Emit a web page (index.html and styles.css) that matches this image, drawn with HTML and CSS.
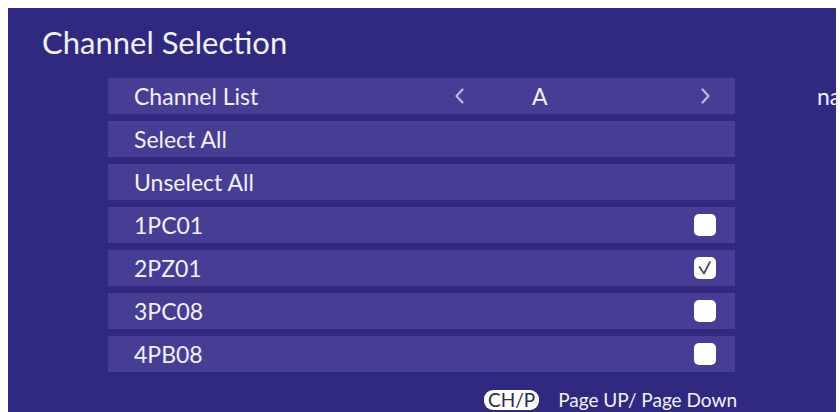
FILE: index.html
```html
<!DOCTYPE html>
<html>
<head>
    <title>Channel Selection</title>
    <link rel="stylesheet" href="styles.css">
</head>
<body>
    <div class="panel">
        <h1 class="title">Channel Selection</h1>
        <div class="content">
            <div class="list">
                <div class="row">
                    <span class="label label-fixed">Channel List</span>
                    <svg class="arrow" width="11" height="18" viewBox="0 0 11 18">
                        <path d="M8.5 2.5 L2.5 9 L8.5 15.5" fill="none" stroke="#bdb7e6" stroke-width="2.2" stroke-linecap="round" stroke-linejoin="round"/>
                    </svg>
                    <span class="value">A</span>
                    <span class="spacer"></span>
                    <svg class="arrow arrow-right" width="11" height="18" viewBox="0 0 11 18">
                        <path d="M2.5 2.5 L8.5 9 L2.5 15.5" fill="none" stroke="#bdb7e6" stroke-width="2.2" stroke-linecap="round" stroke-linejoin="round"/>
                    </svg>
                </div>
                <div class="row"><span class="label">Select All</span></div>
                <div class="row"><span class="label">Unselect All</span></div>
                <div class="row">
                    <span class="label">1PC01</span>
                    <span class="check"></span>
                </div>
                <div class="row">
                    <span class="label">2PZ01</span>
                    <span class="check">
                        <svg width="22" height="22" viewBox="0 0 22 22">
                            <path d="M5.5 10 L10 16.5 L16 5" fill="none" stroke="#4a4a5a" stroke-width="1.7" stroke-linecap="round" stroke-linejoin="round"/>
                        </svg>
                    </span>
                </div>
                <div class="row">
                    <span class="label">3PC08</span>
                    <span class="check"></span>
                </div>
                <div class="row">
                    <span class="label">4PB08</span>
                    <span class="check"></span>
                </div>
                <div class="footer">
                    <span class="key">CH/P</span>
                    <span class="hint">Page UP/ Page Down</span>
                </div>
            </div>
            <div class="side">name</div>
        </div>
    </div>
</body>
</html>
```

FILE: styles.css
```css
html {
    overflow: hidden;
}

body {
    margin: 8px 4px 0 8px;
    background-color: #fff;
    font-family: Lato, "Open Sans", sans-serif;
}

.panel {
    height: 404px;
    background-color: #2f2a80;
    color: #f2f0fa;
    overflow: hidden;
    padding: 15px 0 0 34px;
    box-sizing: border-box;
}

.title {
    margin: 0;
    font-size: 31px;
    font-weight: 400;
    line-height: 38px;
}

.content {
    display: flex;
    margin-top: 17px;
    margin-left: 66px;
}

.list {
    width: 627px;
    flex: none;
    display: flex;
    flex-direction: column;
    gap: 7px;
}

.row {
    height: 36px;
    display: flex;
    align-items: center;
    padding: 0 19px 0 26px;
    background-color: #463e95;
    font-size: 23px;
    line-height: 36px;
}

.label {
    flex: 1;
}

.label-fixed {
    flex: none;
    width: 320px;
}

.arrow {
    flex: none;
}

.arrow-right {
    margin-right: 5px;
}

.value {
    margin-left: 67px;
}

.spacer {
    flex: 1;
}

.check {
    width: 22px;
    height: 22px;
    flex: none;
    background-color: #fff;
    border-radius: 5px;
    display: flex;
}

.footer {
    display: flex;
    justify-content: flex-end;
    align-items: center;
    gap: 19px;
    margin-top: 9px;
    margin-right: -2px;
    font-size: 19px;
}

.key {
    background-color: #fff;
    color: #2b2a55;
    border-radius: 9px;
    padding: 0 4px;
    height: 20px;
    line-height: 20px;
}

.hint {
    color: #f2f0fa;
}

.side {
    margin-left: 82px;
    margin-top: 4px;
    font-size: 23px;
    white-space: nowrap;
}
```
